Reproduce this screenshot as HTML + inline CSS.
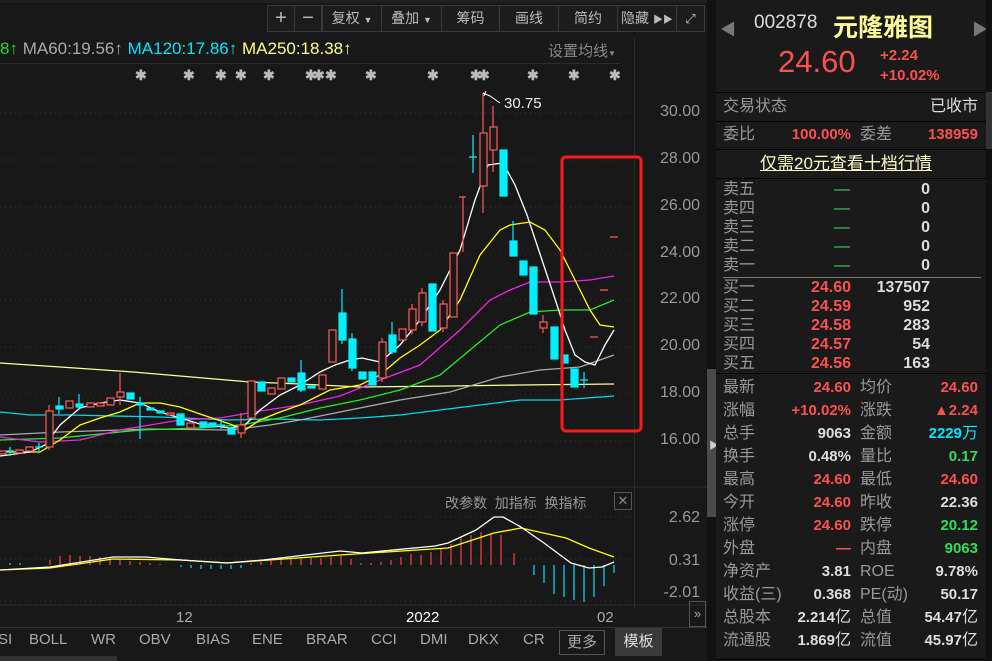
<!DOCTYPE html>
<html><head><meta charset="utf-8"><style>
*{margin:0;padding:0;box-sizing:border-box}
body{width:992px;height:661px;overflow:hidden;background:#181818;font-family:"Liberation Sans","Noto Sans CJK SC",sans-serif;position:relative;color:#ccc}
.a{position:absolute;white-space:nowrap}
.btn{position:absolute;top:5px;height:27px;border:1px solid #3a3a3a;color:#bbb;font-size:14px;line-height:25px;text-align:center;background:#1c1c1c}
.r{color:#ff5050}.g{color:#33dd55}.w{color:#ddd}.c{color:#00e5ff}.lb{color:#999}
.rp{position:absolute;left:716px;top:0;width:270px;height:661px;background:#1a1a1a}
.row{position:absolute;left:0;width:270px;height:22px;font-size:16px;line-height:22px;white-space:nowrap}
.row > span{position:absolute}
.st .row{font-size:15px}
.st .row > span.lb{font-size:16px}
.u{font-weight:normal;font-size:16px}
.hl{position:absolute;left:716px;width:270px;height:1px;background:#000}
.ax{position:absolute;right:292px;font-size:16px;color:#999}
.tab{position:absolute;top:631px;font-size:15px;color:#aaa}
</style></head><body>
<div class="btn" style="left:267px;width:28px;font-size:20px">+</div>
<div class="btn" style="left:294px;width:28px;font-size:20px">−</div>
<div class="btn" style="left:322px;width:60px">复权 <span style="font-size:9px">▼</span></div>
<div class="btn" style="left:381px;width:61px">叠加 <span style="font-size:9px">▼</span></div>
<div class="btn" style="left:441px;width:59px">筹码</div>
<div class="btn" style="left:499px;width:60px">画线</div>
<div class="btn" style="left:558px;width:60px">简约</div>
<div class="btn" style="left:617px;width:60px">隐藏 <span style="font-size:10px">▶▶</span></div>
<div class="btn" style="left:676px;width:29px;font-size:13px">⤢</div>
<div class="a" style="left:0;top:0;width:716px;height:3px;background:#202020"></div>
<div class="a" style="left:0;top:39px;font-size:17px"><span style="color:#2d2">8↑</span> <span style="color:#aaa">MA60:19.56↑</span> <span class="c">MA120:17.86↑</span> <span style="color:#ffff88">MA250:18.38↑</span></div>
<div class="a" style="left:548px;top:40px;font-size:15px;color:#888">设置均线<span style="font-size:8px">▼</span></div>
<div class="a" style="left:0;top:63px;width:620px;height:1px;background:#2c2c2c"></div>
<div class="a" style="left:634px;top:38px;width:1px;height:570px;background:#2c2c2c"></div>
<div class="a" style="left:707px;top:0;width:9px;height:661px;background:#111"></div>
<div class="a" style="left:707px;top:369px;width:9px;height:148px;background:#4a4a4a"></div>
<div class="a" style="left:709px;top:437px;color:#ccc;font-size:10px">▶</div>
<svg class="a" style="left:0;top:0" width="707" height="661">
<g fill="#bbb" font-size="14" font-family="Liberation Sans" font-weight="bold">
<text x="135" y="80">✱</text><text x="183" y="80">✱</text><text x="215" y="80">✱</text><text x="235" y="80">✱</text><text x="263" y="80">✱</text><text x="305" y="80">✱</text><text x="313" y="80">✱</text><text x="325" y="80">✱</text><text x="365" y="80">✱</text><text x="427" y="80">✱</text><text x="470" y="80">✱</text><text x="478" y="80">✱</text><text x="527" y="80">✱</text><text x="568" y="80">✱</text><text x="609" y="80">✱</text>
</g>
<g stroke="#333" stroke-dasharray="1,4">
<path d="M0 113H634M0 160H634M0 207H634M0 254H634M0 300H634M0 347H634M0 394H634M0 441H634M0 517H634M0 559H634M0 601H634"/>
</g>
<path d="M0 487H707M0 605H707" stroke="#2c2c2c"/>
<g fill="none" stroke-width="1.3">
<polyline stroke="#ffff99" points="0,363 60,367 133,372 180,376 250,382 300,384 360,387 450,386 520,385 614,384"/>
<polyline stroke="#00d8ee" points="0,412 30,415 70,415 160,417 230,420 270,419 320,420 360,418 400,415 440,410 480,405 520,400 560,400 614,396"/>
<polyline stroke="#aaa" points="0,435 60,432 150,429 230,430 270,425 300,420 350,410 400,400 450,392 500,377 540,370 580,367 614,355"/>
<polyline stroke="#22ee22" points="0,440 60,438 140,430 200,428 240,425 280,418 320,408 360,400 400,390 440,375 470,350 500,325 530,312 560,310 590,310 614,300"/>
<polyline stroke="#ee22ee" points="0,437 40,442 80,440 120,430 150,425 180,420 220,418 260,411 300,405 340,396 380,380 420,365 460,330 490,300 510,290 530,282 560,282 590,280 614,276"/>
<polyline stroke="#ffff00" points="0,452 40,452 60,440 80,425 100,418 120,412 140,403 160,403 180,407 200,414 230,424 245,430 260,420 280,412 300,405 330,390 360,385 380,375 400,358 420,345 440,330 460,300 480,255 500,230 510,225 530,222 545,230 560,250 575,280 590,310 600,325 614,327"/>
<polyline stroke="#fff" points="0,456 30,452 45,445 60,425 80,408 100,403 120,400 140,403 160,412 180,418 200,424 230,428 245,425 260,410 280,395 300,385 320,372 335,365 350,360 362,358 380,362 400,345 420,320 440,290 460,250 475,200 488,165 503,163 515,185 527,215 537,245 547,275 557,305 565,330 575,355 585,362 595,365 605,345 614,330"/>
</g>
<g stroke="#ff5a5a" fill="#181818" stroke-width="1.2">
<rect x="-1" y="451" width="7" height="3"/><rect x="16" y="450" width="7" height="3"/><rect x="26" y="447" width="7" height="4"/>
<path d="M49 405V450"/><rect x="46" y="411" width="7" height="36"/>
<rect x="66" y="401" width="7" height="7"/><rect x="87" y="403" width="7" height="4"/><rect x="97" y="403" width="7" height="3"/><rect x="107" y="398" width="7" height="7"/>
<path d="M120 373V405"/><rect x="117" y="392" width="7" height="5"/><rect x="167" y="413" width="7" height="2"/><rect x="187" y="423" width="7" height="5"/>
<path d="M241 413V438"/><rect x="238" y="425" width="7" height="8"/><rect x="248" y="381" width="7" height="37"/>
<rect x="268" y="388" width="7" height="6"/><rect x="278" y="378" width="7" height="11"/><rect x="319" y="375" width="7" height="14"/>
<rect x="329" y="330" width="7" height="32"/><path d="M382 338V382"/><rect x="379" y="342" width="7" height="36"/>
<rect x="399" y="329" width="7" height="11"/><path d="M412 304V334"/><rect x="409" y="309" width="7" height="21"/>
<path d="M422 288V326"/><rect x="419" y="293" width="7" height="29"/><path d="M443 300V332"/><rect x="440" y="304" width="7" height="24"/>
<rect x="450" y="253" width="7" height="64"/><path d="M463 197V252M459 197H466"/>
<path d="M483 93V213"/><rect x="480" y="133" width="7" height="53"/><path d="M493 106V172"/><rect x="490" y="127" width="7" height="23"/>
<path d="M543 315V333"/><rect x="540" y="322" width="7" height="6"/>
<path d="M590 337H598M600 290H608M610 237H618"/>
</g>
<g stroke="#00f0ff" fill="#00f0ff" stroke-width="1.2">
<path d="M10 447V456M6 451H14M39 443V452M35 447H43"/>
<path d="M59 397V414"/><rect x="56" y="406" width="7" height="3"/><path d="M79 394V408"/><rect x="76" y="404" width="7" height="3"/>
<rect x="127" y="393" width="7" height="6"/><path d="M140 397V439"/><rect x="137" y="403" width="7" height="2"/>
<rect x="147" y="408" width="7" height="2"/><rect x="157" y="411" width="7" height="2"/><rect x="177" y="414" width="7" height="11"/>
<rect x="200" y="422" width="7" height="5"/><rect x="209" y="423" width="7" height="4"/><path d="M221 421V429M217 425H225"/>
<rect x="228" y="428" width="7" height="6"/><rect x="258" y="382" width="7" height="9"/><rect x="288" y="378" width="7" height="4"/>
<path d="M301 360V392"/><rect x="298" y="373" width="7" height="17"/><rect x="308" y="386" width="7" height="2"/>
<path d="M342 289V344"/><rect x="339" y="313" width="7" height="27"/><path d="M352 333V371"/><rect x="349" y="339" width="7" height="29"/>
<rect x="359" y="372" width="7" height="7"/><rect x="369" y="372" width="7" height="13"/><path d="M392 322V354"/><rect x="389" y="335" width="7" height="17"/>
<rect x="429" y="284" width="7" height="47"/><path d="M473 135V173M469 157H477"/>
<rect x="500" y="150" width="7" height="46"/><path d="M513 221V256"/><rect x="510" y="241" width="7" height="15"/>
<rect x="520" y="261" width="7" height="14"/><rect x="530" y="267" width="7" height="47"/><rect x="551" y="327" width="7" height="32"/>
<rect x="561" y="355" width="7" height="8"/><rect x="571" y="369" width="7" height="18"/><path d="M584 372V388M580 380H588"/>
</g>
<path d="M483 93L490 96L500 103M486 91L484 96" stroke="#fff" fill="none"/>
<text x="504" y="108" fill="#eee" font-size="15" font-family="Liberation Sans">30.75</text>
<rect x="562" y="157" width="79" height="274" rx="4" fill="none" stroke="#ff1a1a" stroke-width="3"/>
<g stroke="#ff4040" stroke-width="1.2">
<path d="M50 565V560M60 565V556M70 565V555M80 565V556M90 565V556M100 565V557M110 565V558M120 565V559M130 565V561M140 565V562M150 565V563M160 565V564"/>
<path d="M251 565V563M261 565V562M271 565V561M281 565V560M291 565V559M301 565V559M311 565V558M321 565V558M331 565V557M341 565V556M351 565V559M361 565V563M371 565V563M381 565V562M391 565V560M401 565V557M411 565V554M421 565V555M431 565V552M441 565V548M451 565V544M461 565V538M471 565V535M481 565V532M491 565V533M501 565V535M514 565V553"/>
</g>
<g stroke="#00e0ff" stroke-width="1.2">
<path d="M10 565V563M20 565V563M181 565V567M191 565V568M201 565V569M211 565V569M221 565V569M231 565V569M241 565V568"/>
<path d="M534 565V575M544 565V583M554 565V594M564 565V597M574 565V600M584 565V602M594 565V597M604 565V586M614 565V573"/>
</g>
<polyline fill="none" stroke="#ffff00" stroke-width="1.3" points="0,570 50,568 113,559 181,560 227,563 340,555 448,548 494,533 521,528 566,538 589,548 614,557"/>
<polyline fill="none" stroke="#fff" stroke-width="1.3" points="0,570 50,567 113,557 145,557 181,560 227,563 263,560 340,551 362,553 435,546 448,543 476,530 494,517 503,517 521,527 544,543 571,563 589,568 602,567 614,562"/>
</svg>
<div class="ax" style="top:103px">30.00</div><div class="ax" style="top:150px">28.00</div><div class="ax" style="top:197px">26.00</div><div class="ax" style="top:244px">24.00</div><div class="ax" style="top:290px">22.00</div><div class="ax" style="top:337px">20.00</div><div class="ax" style="top:384px">18.00</div><div class="ax" style="top:431px">16.00</div>
<div class="ax" style="top:509px">2.62</div><div class="ax" style="top:552px">0.31</div><div class="ax" style="top:584px">-2.01</div>
<div class="a" style="left:445px;top:493px;font-size:14px;color:#999">改参数&nbsp; 加指标&nbsp; 换指标</div>
<div class="a" style="left:614px;top:492px;width:18px;height:18px;border:1px solid #555;color:#888;font-size:13px;text-align:center;line-height:16px">✕</div>
<div class="a" style="left:176px;top:609px;font-size:15px;color:#aaa">12</div>
<div class="a" style="left:406px;top:609px;font-size:15px;color:#fff">2022</div>
<div class="a" style="left:597px;top:609px;font-size:15px;color:#aaa">02</div>
<div class="a" style="left:689px;top:601px;width:17px;height:26px;border:1px solid #555;color:#aaa;font-size:13px;line-height:24px;text-align:center">»</div>
<div class="a" style="left:0;top:627px;width:707px;height:1px;background:#333"></div>
<div class="tab" style="left:-2px">SI</div><div class="tab" style="left:29px">BOLL</div><div class="tab" style="left:91px">WR</div><div class="tab" style="left:139px">OBV</div><div class="tab" style="left:196px">BIAS</div><div class="tab" style="left:252px">ENE</div><div class="tab" style="left:306px">BRAR</div><div class="tab" style="left:371px">CCI</div><div class="tab" style="left:420px">DMI</div><div class="tab" style="left:468px">DKX</div><div class="tab" style="left:523px">CR</div>
<div class="a" style="left:559px;top:630px;width:46px;height:25px;border:1px solid #555;color:#aaa;font-size:15px;text-align:center;line-height:23px">更多</div>
<div class="a" style="left:615px;top:628px;width:47px;height:28px;background:#3a3a3a;color:#ddd;font-size:15px;text-align:center;line-height:28px">模板</div>
<div class="a" style="left:0;top:656px;width:117px;height:5px;background:#333"></div>
<div class="rp">
<div class="a" style="left:4px;top:16px;color:#777;font-size:16px">◀</div>
<div class="a" style="left:38px;top:12px;color:#ddd;font-size:19px">002878</div>
<div class="a" style="left:117px;top:8px;color:#ffff99;font-size:25px;font-weight:bold;font-family:'Noto Sans CJK SC',sans-serif">元隆雅图</div>
<div class="a" style="left:256px;top:16px;color:#777;font-size:16px">▶</div>
<div class="a" style="left:62px;top:44px;color:#ff5050;font-size:31px">24.60</div>
<div class="a" style="left:164px;top:47px;color:#ff5050;font-size:15px;font-weight:bold">+2.24</div>
<div class="a" style="left:164px;top:67px;color:#ff5050;font-size:15px;font-weight:bold">+10.02%</div>
<div class="row" style="top:96px"><span class="lb" style="left:7px">交易状态</span><span class="w" style="right:8px">已收市</span></div>
<div class="row" style="top:124px;font-weight:bold;font-size:15px"><span class="lb" style="left:7px;font-weight:normal;font-size:16px">委比</span><span class="r" style="right:135px">100.00%</span><span class="lb" style="left:144px;font-weight:normal;font-size:16px">委差</span><span class="r" style="right:8px">138959</span></div>
<div class="row" style="top:153px"><span style="left:44px;color:#ffffcc;text-decoration:underline;font-size:17px">仅需20元查看十档行情</span></div>
<div class="row" style="top:180px;height:19px;line-height:19px"><span class="lb" style="left:7px">卖五</span><span class="g" style="left:118px">—</span><span class="w" style="right:56px;font-weight:bold">0</span></div>
<div class="row" style="top:199px;height:19px;line-height:19px"><span class="lb" style="left:7px">卖四</span><span class="g" style="left:118px">—</span><span class="w" style="right:56px;font-weight:bold">0</span></div>
<div class="row" style="top:218px;height:19px;line-height:19px"><span class="lb" style="left:7px">卖三</span><span class="g" style="left:118px">—</span><span class="w" style="right:56px;font-weight:bold">0</span></div>
<div class="row" style="top:237px;height:19px;line-height:19px"><span class="lb" style="left:7px">卖二</span><span class="g" style="left:118px">—</span><span class="w" style="right:56px;font-weight:bold">0</span></div>
<div class="row" style="top:256px;height:19px;line-height:19px"><span class="lb" style="left:7px">卖一</span><span class="g" style="left:118px">—</span><span class="w" style="right:56px;font-weight:bold">0</span></div>
<div class="a" style="left:7px;top:277px;width:258px;height:1px;background:#777"></div>
<div class="row" style="top:278px;height:19px;line-height:19px;font-weight:bold"><span class="lb" style="left:7px;font-weight:normal">买一</span><span class="r" style="right:135px">24.60</span><span class="w" style="right:56px">137507</span></div>
<div class="row" style="top:297px;height:19px;line-height:19px;font-weight:bold"><span class="lb" style="left:7px;font-weight:normal">买二</span><span class="r" style="right:135px">24.59</span><span class="w" style="right:56px">952</span></div>
<div class="row" style="top:316px;height:19px;line-height:19px;font-weight:bold"><span class="lb" style="left:7px;font-weight:normal">买三</span><span class="r" style="right:135px">24.58</span><span class="w" style="right:56px">283</span></div>
<div class="row" style="top:335px;height:19px;line-height:19px;font-weight:bold"><span class="lb" style="left:7px;font-weight:normal">买四</span><span class="r" style="right:135px">24.57</span><span class="w" style="right:56px">54</span></div>
<div class="row" style="top:354px;height:19px;line-height:19px;font-weight:bold"><span class="lb" style="left:7px;font-weight:normal">买五</span><span class="r" style="right:135px">24.56</span><span class="w" style="right:56px">163</span></div>
<div class="st" style="position:absolute;top:377px;left:0;width:270px;font-weight:bold">
<div class="row" style="top:0"><span class="lb" style="left:7px;font-weight:normal">最新</span><span class="r" style="right:135px">24.60</span><span class="lb" style="left:144px;font-weight:normal">均价</span><span class="r" style="right:8px">24.60</span></div>
<div class="row" style="top:23px"><span class="lb" style="left:7px;font-weight:normal">涨幅</span><span class="r" style="right:135px">+10.02%</span><span class="lb" style="left:144px;font-weight:normal">涨跌</span><span class="r" style="right:8px">▲2.24</span></div>
<div class="row" style="top:46px"><span class="lb" style="left:7px;font-weight:normal">总手</span><span class="w" style="right:135px">9063</span><span class="lb" style="left:144px;font-weight:normal">金额</span><span class="c" style="right:8px">2229<span class="u">万</span></span></div>
<div class="row" style="top:69px"><span class="lb" style="left:7px;font-weight:normal">换手</span><span class="w" style="right:135px">0.48%</span><span class="lb" style="left:144px;font-weight:normal">量比</span><span class="g" style="right:8px">0.17</span></div>
<div class="row" style="top:92px"><span class="lb" style="left:7px;font-weight:normal">最高</span><span class="r" style="right:135px">24.60</span><span class="lb" style="left:144px;font-weight:normal">最低</span><span class="r" style="right:8px">24.60</span></div>
<div class="row" style="top:115px"><span class="lb" style="left:7px;font-weight:normal">今开</span><span class="r" style="right:135px">24.60</span><span class="lb" style="left:144px;font-weight:normal">昨收</span><span class="w" style="right:8px">22.36</span></div>
<div class="row" style="top:138px"><span class="lb" style="left:7px;font-weight:normal">涨停</span><span class="r" style="right:135px">24.60</span><span class="lb" style="left:144px;font-weight:normal">跌停</span><span class="g" style="right:8px">20.12</span></div>
<div class="row" style="top:161px"><span class="lb" style="left:7px;font-weight:normal">外盘</span><span class="r" style="right:135px">—</span><span class="lb" style="left:144px;font-weight:normal">内盘</span><span class="g" style="right:8px">9063</span></div>
<div class="row" style="top:184px"><span class="lb" style="left:7px;font-weight:normal">净资产</span><span class="w" style="right:135px">3.81</span><span class="lb" style="left:144px;font-weight:normal">ROE</span><span class="w" style="right:8px">9.78%</span></div>
<div class="row" style="top:207px"><span class="lb" style="left:7px;font-weight:normal">收益(三)</span><span class="w" style="right:135px">0.368</span><span class="lb" style="left:144px;font-weight:normal">PE(动)</span><span class="w" style="right:8px">50.17</span></div>
<div class="row" style="top:230px"><span class="lb" style="left:7px;font-weight:normal">总股本</span><span class="w" style="right:135px">2.214<span class="u">亿</span></span><span class="lb" style="left:144px;font-weight:normal">总值</span><span class="w" style="right:8px">54.47<span class="u">亿</span></span></div>
<div class="row" style="top:253px"><span class="lb" style="left:7px;font-weight:normal">流通股</span><span class="w" style="right:135px">1.869<span class="u">亿</span></span><span class="lb" style="left:144px;font-weight:normal">流值</span><span class="w" style="right:8px">45.97<span class="u">亿</span></span></div>
</div>
</div>
<div class="hl" style="top:92px"></div><div class="hl" style="top:121px"></div><div class="hl" style="top:149px"></div><div class="hl" style="top:178px"></div><div class="hl" style="top:373px"></div><div class="hl" style="top:659px"></div>
<div class="a" style="left:986px;top:0;width:6px;height:661px;background:#111"></div>
<div class="a" style="left:986px;top:92px;width:6px;height:57px;background:#333"></div>
</body></html>
